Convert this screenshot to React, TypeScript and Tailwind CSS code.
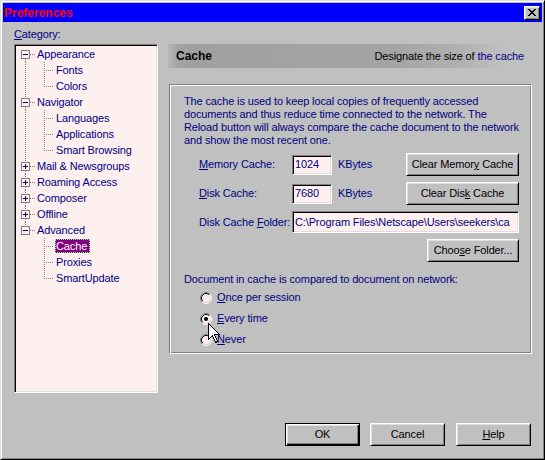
import React from "react";

const raised =
  "bg-[#c0c0c0] border border-t-white border-l-white border-r-black border-b-black shadow-[inset_1px_1px_#dfdfdf,inset_-1px_-1px_#808080]";
const defRaised =
  "bg-[#c0c0c0] border border-black shadow-[inset_1px_1px_#fff,inset_-1px_-1px_#000,inset_-2px_-2px_#808080,inset_2px_2px_#dfdfdf]";
const sunken =
  "border border-t-[#808080] border-l-[#808080] border-r-white border-b-white shadow-[inset_1px_1px_#000,inset_-1px_-1px_#dfdfdf]";

type Row = {
  label: string;
  level: 0 | 1;
  exp?: "+" | "-";
  first?: boolean;
  last?: boolean;
  parentLast?: boolean;
  lastChild?: boolean;
  selected?: boolean;
};

const rows: Row[] = [
  { label: "Appearance", level: 0, exp: "-", first: true },
  { label: "Fonts", level: 1 },
  { label: "Colors", level: 1, lastChild: true },
  { label: "Navigator", level: 0, exp: "-" },
  { label: "Languages", level: 1 },
  { label: "Applications", level: 1 },
  { label: "Smart Browsing", level: 1, lastChild: true },
  { label: "Mail & Newsgroups", level: 0, exp: "+" },
  { label: "Roaming Access", level: 0, exp: "+" },
  { label: "Composer", level: 0, exp: "+" },
  { label: "Offline", level: 0, exp: "+" },
  { label: "Advanced", level: 0, exp: "-", last: true },
  { label: "Cache", level: 1, parentLast: true, selected: true },
  { label: "Proxies", level: 1, parentLast: true },
  { label: "SmartUpdate", level: 1, parentLast: true, lastChild: true },
];

const dot = { stroke: "#808080", strokeDasharray: "1 1", strokeWidth: 1 };

function TopLines({ r }: { r: Row }) {
  return (
    <svg width="21" height="16" className="shrink-0" shapeRendering="crispEdges">
      {!r.first && <line x1="9.5" y1="0" x2="9.5" y2="4" {...dot} />}
      {!r.last && <line x1="9.5" y1="13" x2="9.5" y2="16" {...dot} />}
      <line x1="14" y1="8.5" x2="20" y2="8.5" {...dot} />
      <rect x="5.5" y="4.5" width="8" height="8" fill="#fff0f0" stroke="#808080" />
      <line x1="7" y1="8.5" x2="12" y2="8.5" stroke="#000080" />
      {r.exp === "+" && <line x1="9.5" y1="6" x2="9.5" y2="11" stroke="#000080" />}
    </svg>
  );
}

function ChildLines({ r }: { r: Row }) {
  return (
    <svg width="40" height="16" className="shrink-0" shapeRendering="crispEdges">
      {!r.parentLast && <line x1="9.5" y1="0" x2="9.5" y2="16" {...dot} />}
      <line x1="28.5" y1="0" x2="28.5" y2={r.lastChild ? 9 : 16} {...dot} />
      <line x1="30" y1="8.5" x2="38" y2="8.5" {...dot} />
    </svg>
  );
}

function Radio({ checked }: { checked?: boolean }) {
  return (
    <svg width="12" height="12" viewBox="0 0 12 12" className="shrink-0">
      <circle cx="6" cy="6" r="4.2" fill="#fff0f0" />
      <path d="M2.11 9.89 A5.5 5.5 0 0 1 9.89 2.11" fill="none" stroke="#808080" />
      <path d="M9.89 2.11 A5.5 5.5 0 0 1 2.11 9.89" fill="none" stroke="#ffffff" />
      <path d="M2.82 9.18 A4.5 4.5 0 0 1 9.18 2.82" fill="none" stroke="#000000" />
      <path d="M9.18 2.82 A4.5 4.5 0 0 1 2.82 9.18" fill="none" stroke="#dfdfdf" />
      {checked && <circle cx="6" cy="6" r="2" fill="#000000" />}
    </svg>
  );
}

export default function App() {
  return (
    <div className="relative w-[545px] h-[460px] bg-[#c0c0c0] border border-t-[#dfdfdf] border-l-[#dfdfdf] border-r-black border-b-black shadow-[inset_1px_1px_#fff,inset_-1px_-1px_#808080] p-[2px] [font-family:'Liberation_Sans',Arial,sans-serif] text-[11px] leading-[13px] tracking-[-0.13px] text-[#000080] overflow-hidden">
      {/* Title bar */}
      <div className="h-[19px] bg-[#0000ff] flex items-center justify-between pl-[1px] pr-[2px]">
        <span className="text-[#ff0000] font-bold text-[12px] leading-[14px] tracking-normal">Preferences</span>
        <div className={raised + " w-[16px] h-[14px] flex items-center justify-center"}>
          <svg width="8" height="7" viewBox="0 0 8 7" shapeRendering="crispEdges">
            <path d="M0 0h2v1h1v1h2v-1h1v-1h2v1h-1v1h-1v1h-1v1h1v1h1v1h1v1h-2v-1h-1v-1h-2v1h-1v1h-2v-1h1v-1h1v-1h1v-1h-1v-1h-1v-1h-1z" fill="#000" />
          </svg>
        </div>
      </div>

      {/* Body */}
      <div className="flex pl-[11px] gap-[10px] h-[371px]">
        {/* Left column */}
        <div className="w-[144px] pt-[6px] flex flex-col">
          <div className="h-[13px]">
            <u>C</u>ategory:
          </div>
          <div className={sunken + " mt-[3px] h-[349px] bg-[#fff0f0] p-[1px] overflow-hidden"}>
            {rows.map((r) => (
              <div key={r.label} className="flex items-center h-[16px] whitespace-nowrap">
                {r.level === 0 ? <TopLines r={r} /> : <ChildLines r={r} />}
                {r.selected ? (
                  <span className="-ml-[1px] h-[14px] leading-[12px] pr-[2px] bg-[#800080] text-white border border-dotted border-[#7fff7f]">
                    {r.label}
                  </span>
                ) : (
                  <span className="leading-[16px]">{r.label}</span>
                )}
              </div>
            ))}
          </div>
        </div>

        {/* Right column */}
        <div className="w-[364px] pt-[22px] flex flex-col">
          <div className="h-[24px] w-[363px] bg-[linear-gradient(to_right,#b8b8b8_0%,#a0a0a0_3%,#a3a3a3_60%,#b0b0b0_80%,#c0c0c0_92%)] flex items-center justify-between pl-[8px] pr-[7px]">
            <span className="text-black font-bold text-[12px] leading-[14px] tracking-normal">Cache</span>
            <span className="text-black">
              Designate the size of <span className="text-[#000080]">the cache</span>
            </span>
          </div>

          <div className="ml-[1px] mt-[16px] h-[270px] w-[363px] border border-t-[#808080] border-l-[#808080] border-r-white border-b-white shadow-[inset_1px_1px_#fff,inset_-1px_-1px_#808080] pt-[10px] pl-[14px] pr-[12px] flex flex-col">
            <p className="whitespace-nowrap">
              The cache is used to keep local copies of frequently accessed
              <br />
              documents and thus reduce time connected to the network. The
              <br />
              Reload button will always compare the cache document to the network
              <br />
              and show the most recent one.
            </p>

            <div className="pl-[15px] flex flex-col">
              <div className="mt-[6px] h-[23px] flex items-center">
                <span className="w-[93px]">
                  <u>M</u>emory Cache:
                </span>
                <div className={sunken + " w-[40px] h-[20px] bg-[#fff0f0] pl-[2px] flex items-center"}>1024</div>
                <span className="ml-[6px]">KBytes</span>
                <div className={raised + " ml-auto w-[113px] h-[23px] flex items-center justify-center text-black"}>
                  <span>
                    Clear Memor<u>y</u> Cache
                  </span>
                </div>
              </div>
              <div className="mt-[6px] h-[23px] flex items-center">
                <span className="w-[93px]">
                  <u>D</u>isk Cache:
                </span>
                <div className={sunken + " w-[40px] h-[20px] bg-[#fff0f0] pl-[2px] flex items-center"}>7680</div>
                <span className="ml-[6px]">KBytes</span>
                <div className={raised + " ml-auto w-[113px] h-[23px] flex items-center justify-center text-black"}>
                  <span>
                    Clear Dis<u>k</u> Cache
                  </span>
                </div>
              </div>
              <div className="mt-[6px] h-[22px] flex items-center">
                <span className="w-[93px] whitespace-nowrap">
                  Disk Cache <u>F</u>older:
                </span>
                <div className={sunken + " flex-1 h-[22px] bg-[#fff0f0] pl-[2px] flex items-center overflow-hidden whitespace-nowrap"}>
                  {"C:\\Program Files\\Netscape\\Users\\seekers\\ca"}
                </div>
              </div>
              <div className="mt-[6px] h-[23px] flex justify-end">
                <div className={raised + " w-[92px] h-[23px] flex items-center justify-center text-black"}>
                  <span>
                    Choo<u>s</u>e Folder...
                  </span>
                </div>
              </div>
            </div>

            <div className="mt-[11px] h-[13px]">Document in cache is compared to document on network:</div>
            <div className="pl-[16px] pt-[1px] flex flex-col">
              <div className="h-[21px] flex items-center gap-[5px]">
                <Radio />
                <span>
                  <u>O</u>nce per session
                </span>
              </div>
              <div className="h-[21px] flex items-center gap-[5px]">
                <Radio checked />
                <span>
                  <u>E</u>very time
                </span>
              </div>
              <div className="h-[21px] flex items-center gap-[5px]">
                <Radio />
                <span>
                  <u>N</u>ever
                </span>
              </div>
            </div>
          </div>
        </div>
      </div>

      {/* Bottom buttons */}
      <div className="flex justify-end gap-[10px] pr-[11px] mt-[30px] text-black">
        <div className={defRaised + " w-[75px] h-[23px] flex items-center justify-center"}>OK</div>
        <div className={raised + " w-[75px] h-[23px] flex items-center justify-center"}>Cancel</div>
        <div className={raised + " ml-[1px] w-[75px] h-[23px] flex items-center justify-center"}>
          <span>
            <u>H</u>elp
          </span>
        </div>
      </div>

      {/* Mouse cursor */}
      <svg
        width="13"
        height="21"
        viewBox="0 0 13 21"
        className="absolute left-[207px] top-[322px]"
        shapeRendering="crispEdges"
      >
        <path d="M0.5 0.5 L0.5 16.5 L4.5 12.5 L7.5 19.5 L9.5 18.5 L6.5 11.5 L11.5 11.5 Z" fill="#fff" stroke="#000" />
      </svg>
    </div>
  );
}
